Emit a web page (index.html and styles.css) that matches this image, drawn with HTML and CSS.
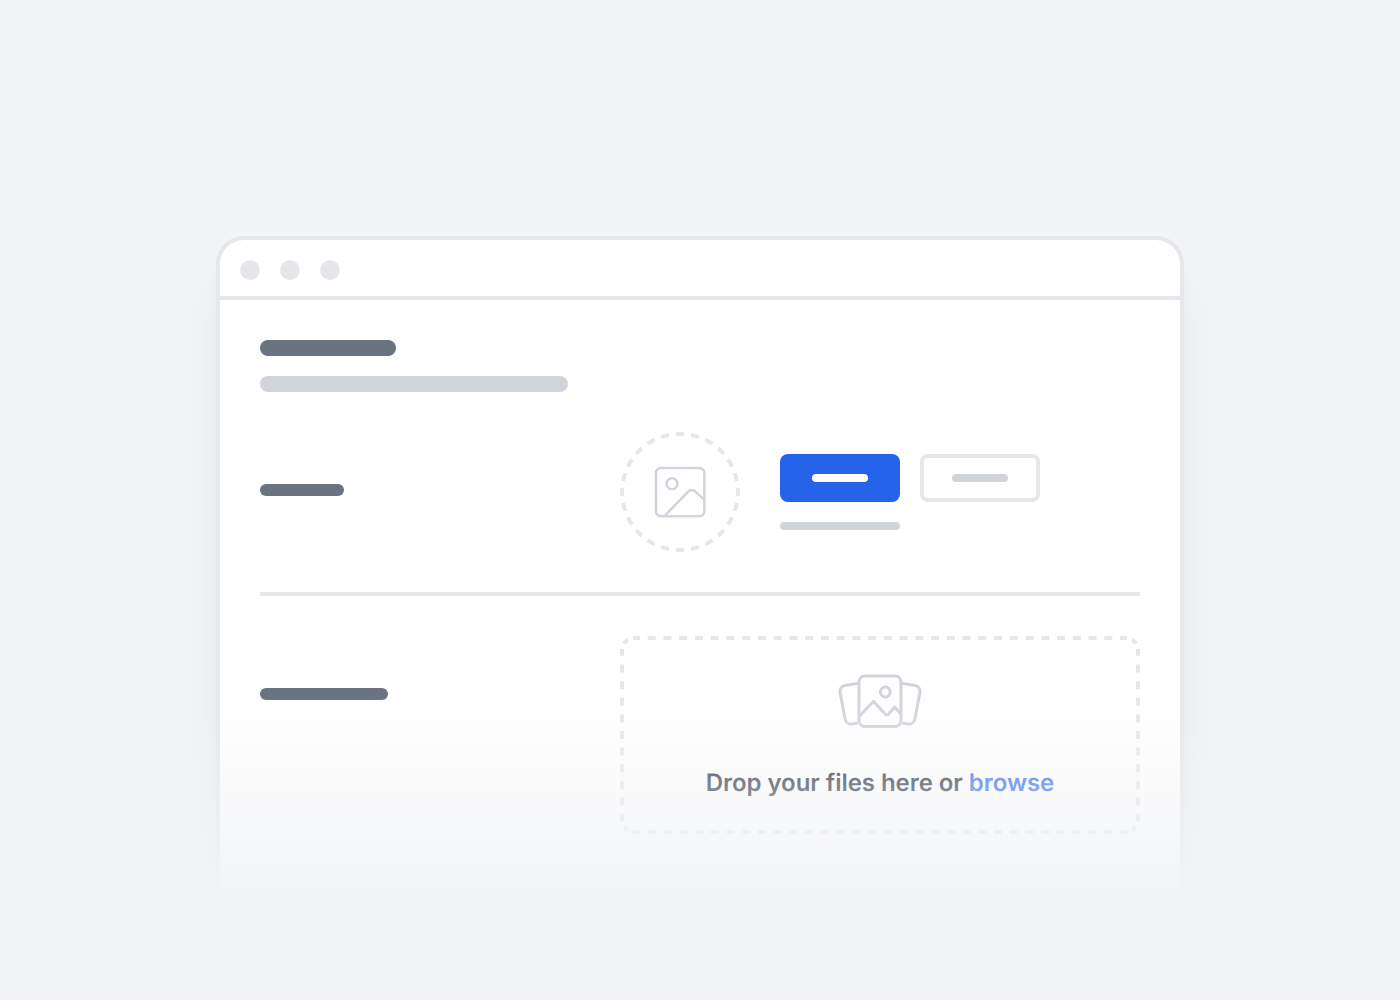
FILE: index.html
```html
<!DOCTYPE html>
<html lang="en">
<head>
<meta charset="utf-8">
<title>File upload</title>
<link rel="stylesheet" href="styles.css">
</head>
<body>
<main class="stage">
  <section class="window">
    <header class="titlebar">
      <span class="dot"></span><span class="dot"></span><span class="dot"></span>
    </header>
    <div class="content">
      <div class="heading">
        <div class="bar bar-title"></div>
        <div class="bar bar-subtitle"></div>
      </div>
      <div class="row row-avatar">
        <div class="bar bar-label"></div>
        <svg class="avatar" viewBox="0 0 120 120" fill="none">
          <circle cx="60" cy="60" r="58" stroke="#e5e7eb" stroke-width="4" pathLength="240" stroke-dasharray="5.27 4.73" stroke-dashoffset="2.635"/>
          <g stroke="#d1d5db" stroke-width="2.5">
            <rect x="36" y="36" width="48.300" height="48.300" rx="5"/>
            <circle cx="52" cy="51.7" r="5.5"/>
            <path d="M44.5 84 67.700 60.200Q71.800 56 76 60.200L83.500 67.200"/>
          </g>
        </svg>
        <div class="actions">
          <div class="buttons">
            <div class="button primary"><span></span></div>
            <div class="button secondary"><span></span></div>
          </div>
          <div class="bar bar-hint"></div>
        </div>
      </div>
      <div class="row row-drop">
        <div class="bar bar-label-wide"></div>
        <div class="dropzone">
          <svg class="outline" viewBox="0 0 520 198" fill="none" stroke="#e5e7eb" stroke-width="4">
            <path d="M13 2H507M13 196H507" stroke-dasharray="8 7.742" stroke-dashoffset="1"/>
            <path d="M2 13V185M518 13V185" stroke-dasharray="8 8.6" stroke-dashoffset="1"/>
            <path d="M4 7.500Q5.500 5 8 4M512 4Q514.500 5 516 7.500M516 190.500Q514.500 193 512 194M8 194Q5.500 193 4 190.500"/>
          </svg>
          <svg class="files" viewBox="0 0 84 56" fill="none" stroke="#d1d5db" stroke-width="3" stroke-linejoin="round">
            <rect x="21" y="3" width="42" height="50.500" rx="6"/>
            <path d="M20.500 10.200 7 12.400A6 6 0 0 0 2 19.300L7.200 46.300A6 6 0 0 0 14.100 51L20 50.100M63.500 10.200 77 12.400A6 6 0 0 1 82 19.300L76.800 46.300A6 6 0 0 1 69.900 51L64 50.100"/>
            <circle cx="47.300" cy="19" r="4.900"/>
            <path d="M21.500 43 35.500 28.300 47.200 41.100Q49 42.800 50.600 41.100L56.700 34 63 41.300"/>
          </svg>
          <p class="prompt">Drop your files here or <span class="browse">browse</span></p>
        </div>
      </div>
    </div>
  </section>
  <div class="fade"></div>
</main>
</body>
</html>
```
FILE: styles.css
```css
* { box-sizing: border-box; }
body { margin: 0; background: #f3f4f6; font-family: Inter, "Liberation Sans", sans-serif; }
.stage { position: relative; height: 1000px; padding-top: 236px; overflow: hidden; }
.window {
  width: 968px;
  height: 680px;
  margin: 0 auto;
  border: 4px solid #e5e7eb;
  border-radius: 28px 28px 0 0;
  background: #fff;
  box-shadow: 0 40px 50px -10px rgba(0, 0, 0, .08), 0 20px 20px -6px rgba(0, 0, 0, .04);
}
.titlebar { display: flex; align-items: center; gap: 20px; height: 60px; padding: 0 20px; border-bottom: 4px solid #e5e7eb; }
.dot { width: 20px; height: 20px; margin-top: 4px; border-radius: 50%; background: #e5e7eb; }
.content { padding: 40px 40px 0; }
.heading { display: flex; flex-direction: column; gap: 20px; }
.bar { border-radius: 8px; background: #6b7280; }
.bar-title { width: 136px; height: 16px; }
.bar-subtitle { width: 308px; height: 16px; background: #d1d5db; }
.row { display: grid; align-items: center; }
.row-avatar { grid-template-columns: 360px 120px 1fr; padding: 40px 0; border-bottom: 4px solid #e5e7eb; }
.bar-label { width: 84px; height: 12px; margin-bottom: 4px; }
.avatar { display: block; width: 120px; height: 120px; }
.actions { display: flex; flex-direction: column; gap: 20px; padding-left: 40px; }
.buttons { display: flex; gap: 20px; }
.button { display: grid; place-items: center; width: 120px; height: 48px; border-radius: 8px; }
.button span { width: 56px; height: 8px; border-radius: 4px; }
.primary { background: #2563eb; }
.primary span { background: #fff; }
.secondary { border: 4px solid #e5e7eb; }
.secondary span { background: #d1d5db; }
.bar-hint { width: 120px; height: 8px; background: #d1d5db; }
.row-drop { grid-template-columns: 360px 520px; align-items: start; padding-top: 40px; }
.bar-label-wide { width: 128px; height: 12px; margin-top: 52px; }
.dropzone { position: relative; display: flex; flex-direction: column; align-items: center; height: 198px; padding-top: 37px; }
.outline { position: absolute; inset: 0; width: 520px; height: 198px; }
.files { width: 84px; height: 56px; overflow: visible; }
.prompt { margin: 38.5px 0 0; color: #1f2937; font-size: 24px; font-weight: 600; letter-spacing: -.05px; line-height: 30px; text-rendering: geometricPrecision; white-space: nowrap; }
.browse { color: #2563eb; }
.fade { position: absolute; left: 0; right: 0; top: 696px; bottom: 0; background: linear-gradient(rgba(243, 244, 246, 0), #f3f4f6 200px); }
```
